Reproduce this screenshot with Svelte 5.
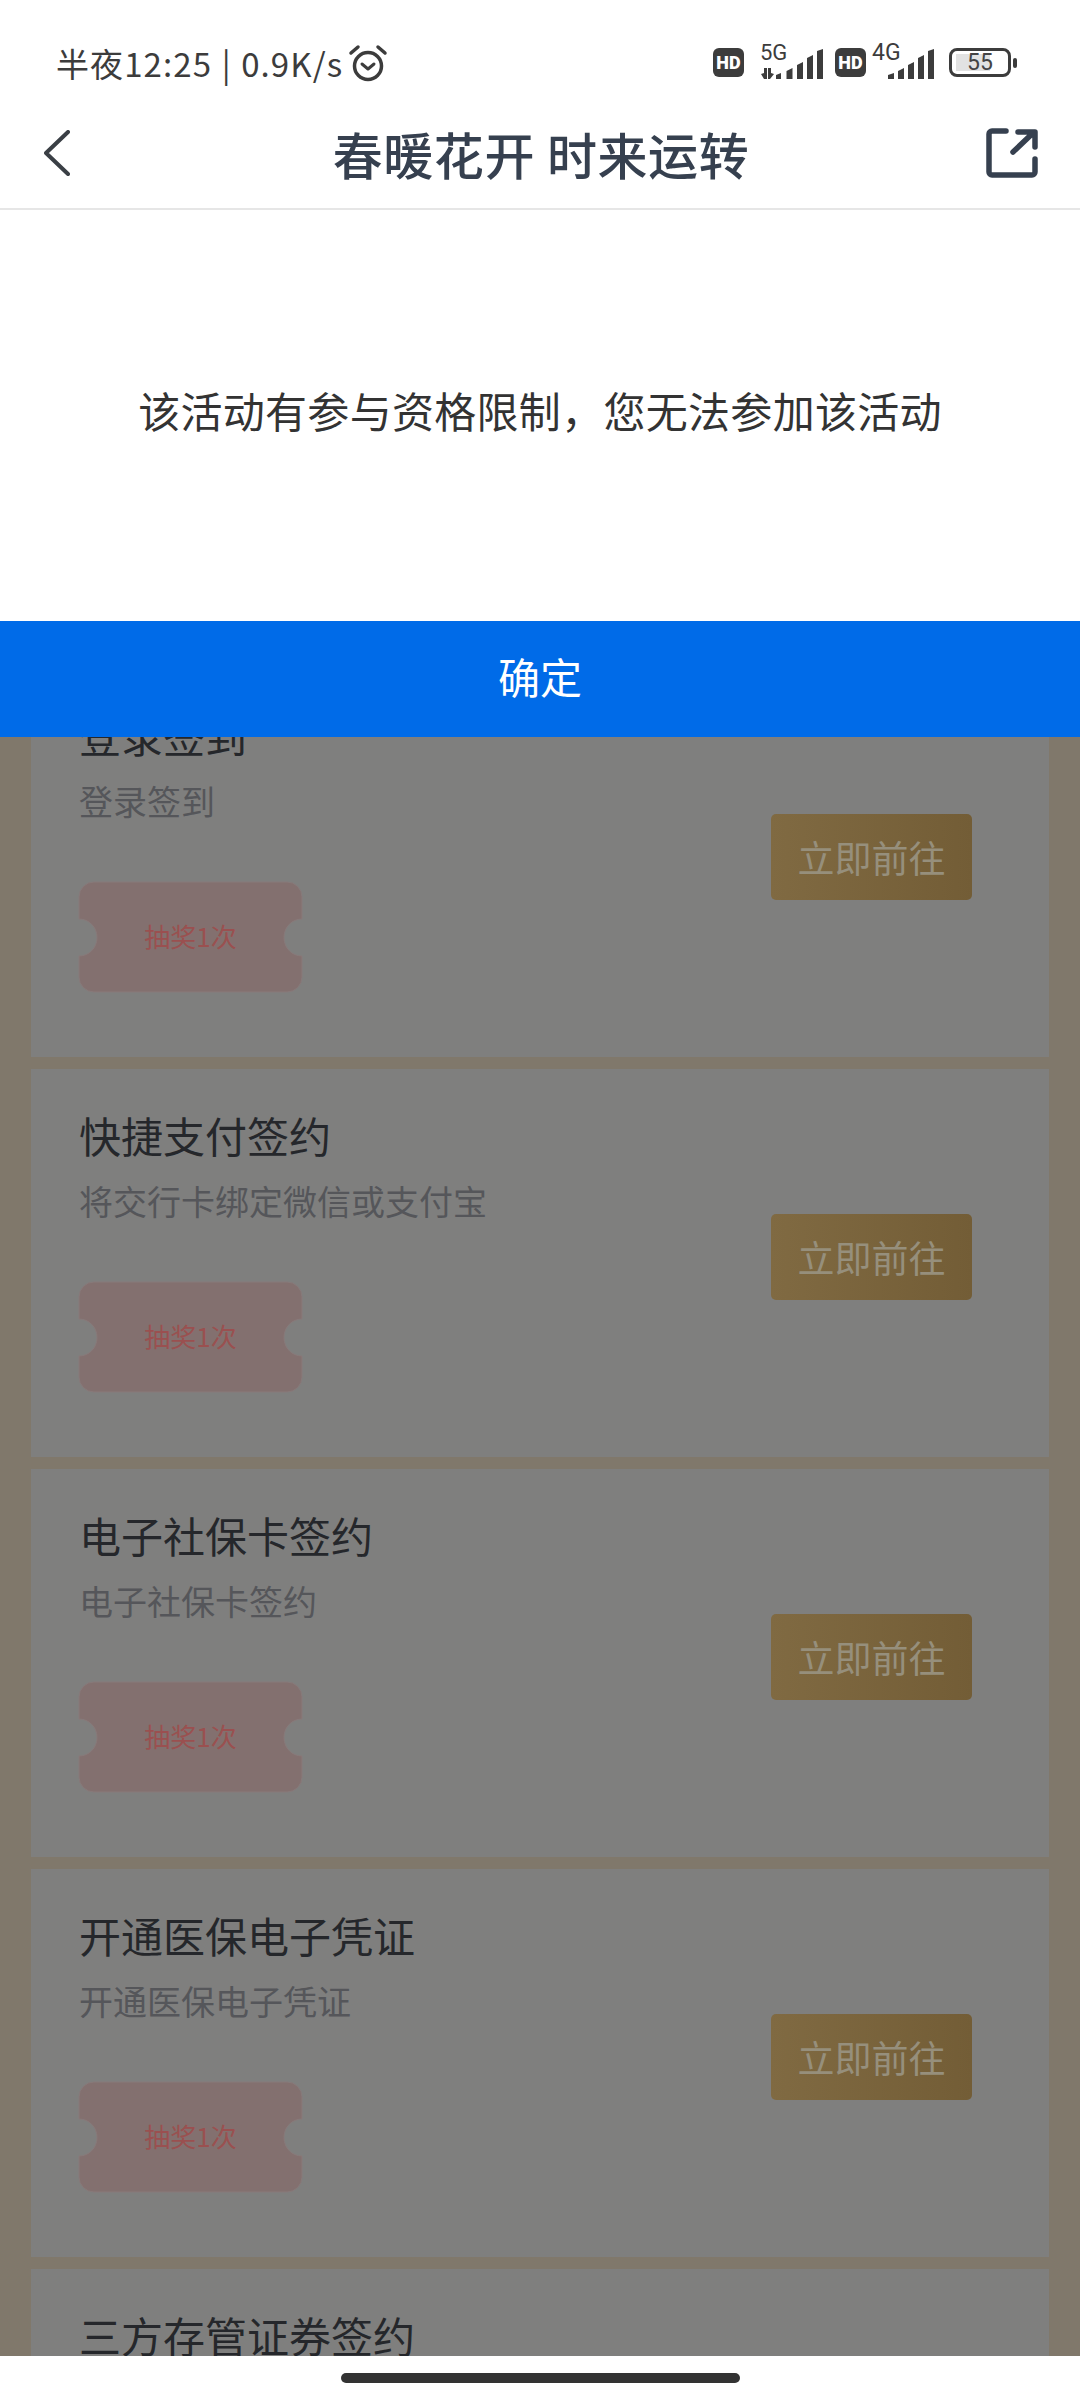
<script>
	const tasks = [
		{ title: '登录签到', desc: '登录签到' },
		{ title: '快捷支付签约', desc: '将交行卡绑定微信或支付宝' },
		{ title: '电子社保卡签约', desc: '电子社保卡签约' },
		{ title: '开通医保电子凭证', desc: '开通医保电子凭证' },
		{ title: '三方存管证券签约', desc: '三方存管证券签约' }
	];
</script>

<div class="screen">
	<div class="status">
		<div class="status-left">
			<span>半夜12:25 | 0.9K/s</span>
			<svg class="alarm" width="40" height="38" viewBox="0 0 40 38" fill="none" stroke="#3c3c3c" stroke-linecap="round">
				<circle cx="20" cy="22" r="13.5" stroke-width="3.5" />
				<path d="M14 20l6 5 6-5" stroke-width="3" stroke-linejoin="round" />
				<path d="M3 9l7-6M37 9l-7-6" stroke-width="3.5" />
			</svg>
		</div>
		<div class="status-right">
			<span class="hd">HD</span>
			<svg class="signal" width="66" height="40" viewBox="0 0 66 40">
				<text x="3" y="17" font-size="22" fill="#3c3c3c" font-family="Roboto, sans-serif">5G</text>
				<path d="M4 31l3-1v-5h3v11H7zM11 25h3v5l3 1-4 5h-2z" fill="#3c3c3c" />
				<path d="M19 32l5-2v6h-5zM29.500 28l6-3v11h-6zM40 22l6-3v17h-6zM50 15l6-3v24h-6zM60 8l6-2v30h-6z" fill="#3c3c3c" />
			</svg>
			<span class="hd">HD</span>
			<svg class="signal second" width="63" height="40" viewBox="0 0 63 40">
				<text x="0" y="17" font-size="23" fill="#3c3c3c" font-family="Roboto, sans-serif">4G</text>
				<path d="M16 32l6-2v6h-6zM26 28l6-3v11h-6zM36 22l6-3v17h-6zM46 15l6-3v24h-6zM56 8l6-2v30h-6z" fill="#3c3c3c" />
			</svg>
			<div class="battery">
				<div class="battery-body"><i></i><span>55</span></div>
				<b></b>
			</div>
		</div>
	</div>

	<header class="nav">
		<svg class="back" width="26" height="46" viewBox="0 0 26 46" fill="none" stroke="#3a3f45" stroke-width="4" stroke-linecap="round" stroke-linejoin="round">
			<path d="M24 2L2 23l22 21" />
		</svg>
		<h1>春暖花开 时来运转</h1>
		<svg class="share" width="52" height="50" viewBox="0 0 52 50" fill="none" stroke="#36404f" stroke-width="5.500" stroke-linecap="round" stroke-linejoin="round">
			<path d="M20 3H6a3 3 0 0 0-3 3v38a3 3 0 0 0 3 3h40a3 3 0 0 0 3-3V31" />
			<path d="M32 4h17v15M27 24L47 5" />
		</svg>
	</header>

	<section class="dialog">
		<p>该活动有参与资格限制，您无法参加该活动</p>
		<button>确定</button>
	</section>

	<main class="list">
		{#each tasks as task}
			<article class="card">
				<div class="info">
					<h2>{task.title}</h2>
					<p>{task.desc}</p>
					<div class="ticket">
						<svg width="225" height="112" viewBox="0 0 225 112">
							<path
								d="M16 1H209a15 15 0 0 1 15 15V38C214 38 206 46 206 56.500S214 75 224 75V96a15 15 0 0 1-15 15H16a15 15 0 0 1-15-15V75C11 75 19 67 19 56.500S11 38 1 38V16A15 15 0 0 1 16 1z"
								fill="#83706f"
								stroke="#887a7a"
							/>
						</svg>
						<span>抽奖1次</span>
					</div>
				</div>
				<div class="go">立即前往</div>
			</article>
		{/each}
	</main>

	<div class="home"><i></i></div>
</div>

<style>
	:global(body) {
		background: #fff;
	}

	.screen {
		display: flex;
		flex-direction: column;
		width: 1080px;
		height: 2400px;
		overflow: hidden;
		background: #fff;
		font-family: 'Noto Sans CJK SC', 'Noto Sans', sans-serif;
	}

	.status {
		display: flex;
		flex: none;
		align-items: center;
		justify-content: space-between;
		box-sizing: border-box;
		height: 128px;
		padding: 0 63px 3px 56px;
		color: #3c3c3c;
	}

	.status-left {
		display: flex;
		align-items: center;
		gap: 5px;
		font-size: 33px;
		letter-spacing: 1.1px;
		word-spacing: 1px;
	}

	.status-right {
		display: flex;
		align-items: center;
	}

	.hd {
		display: flex;
		align-items: center;
		justify-content: center;
		width: 31px;
		height: 29px;
		border-radius: 6px;
		background: #3c3c3c;
		color: #fff;
		font-family: Roboto, sans-serif;
		font-size: 18px;
		font-weight: 900;
	}

	.signal {
		margin: 0 12px 0 13px;
		overflow: visible;
	}

	.signal.second {
		margin: 0 14px 0 6px;
	}

	.battery {
		display: flex;
		align-items: center;
		gap: 2px;
	}

	.battery-body {
		display: flex;
		position: relative;
		align-items: center;
		justify-content: center;
		box-sizing: border-box;
		width: 62px;
		height: 29px;
		border: 3px solid #3c3c3c;
		border-radius: 8px;
		color: #444;
		font-family: Roboto, sans-serif;
		font-size: 23px;
	}

	.battery-body i {
		position: absolute;
		top: 3px;
		bottom: 3px;
		left: 4px;
		width: 34px;
		background: #e2e2e2;
	}

	.battery-body span {
		position: relative;
	}

	.battery b {
		width: 4px;
		height: 10px;
		border-radius: 2px;
		background: #3c3c3c;
	}

	.nav {
		display: grid;
		flex: none;
		grid-template-columns: 1fr auto 1fr;
		align-items: center;
		box-sizing: border-box;
		height: 82px;
		padding: 0 42px 30px 44px;
		border-bottom: 2px solid #e6e6e6;
	}

	.nav h1 {
		margin: 0;
		color: #36404f;
		font-size: 50px;
		font-weight: 500;
		letter-spacing: 0.6px;
		line-height: 1;
	}

	.back {
		justify-self: start;
	}

	.share {
		justify-self: end;
	}

	.dialog {
		flex: none;
		background: #fff;
	}

	.dialog p {
		display: flex;
		align-items: center;
		justify-content: center;
		box-sizing: border-box;
		height: 411px;
		margin: 0;
		padding-bottom: 12px;
		color: #333;
		font-size: 42px;
		letter-spacing: 0.3px;
	}

	.dialog button {
		display: block;
		width: 100%;
		height: 116px;
		padding: 0 0 8px;
		border: 0;
		background: #006be8;
		color: #fff;
		font: inherit;
		font-size: 42px;
	}

	.list {
		display: flex;
		flex: 1;
		flex-direction: column;
		gap: 12px;
		min-height: 0;
		overflow: hidden;
		padding: 0 31px;
		background: #80786b;
	}

	.card {
		display: flex;
		flex: none;
		align-items: center;
		justify-content: space-between;
		box-sizing: border-box;
		height: 388px;
		padding: 0 77px 0 48px;
		background: #7f7f7e;
	}

	.card:first-child {
		margin-top: -68px;
	}

	.info {
		align-self: flex-start;
		padding-top: 36px;
	}

	h2 {
		margin: 0;
		color: #25272b;
		font-size: 42px;
		font-weight: 400;
		line-height: 60px;
	}

	.info p {
		margin: 12px 0 0;
		color: #55565a;
		font-size: 34px;
		line-height: 48px;
	}

	.ticket {
		display: flex;
		position: relative;
		align-items: center;
		justify-content: center;
		width: 225px;
		height: 112px;
		margin: 56px 0 0 -1px;
		color: #9a5050;
		font-size: 26px;
	}

	.ticket svg {
		position: absolute;
		top: 0;
		left: 0;
	}

	.ticket span {
		position: relative;
		margin-bottom: 3px;
	}

	.go {
		display: flex;
		align-items: center;
		justify-content: center;
		width: 201px;
		height: 86px;
		margin-bottom: 13px;
		border-radius: 5px;
		background: linear-gradient(90deg, #806a42, #735d36);
		color: #968f7c;
		font-size: 37px;
	}

	.home {
		display: flex;
		flex: none;
		justify-content: center;
		box-sizing: border-box;
		height: 44px;
		padding-top: 17px;
		background: #fff;
	}

	.home i {
		width: 399px;
		height: 10px;
		border-radius: 5px;
		background: #333;
	}
</style>
